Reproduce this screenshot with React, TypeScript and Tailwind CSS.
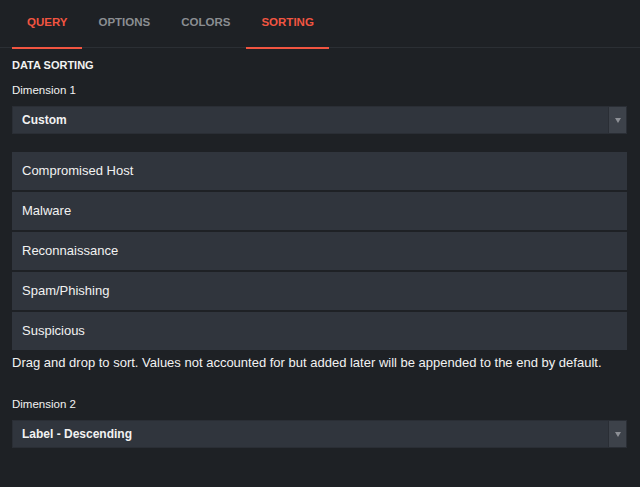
import React from 'react';

const tabs = [
  { label: 'QUERY', active: true },
  { label: 'OPTIONS', active: false },
  { label: 'COLORS', active: false },
  { label: 'SORTING', active: true },
];

const sortValues = ['Compromised Host', 'Malware', 'Reconnaissance', 'Spam/Phishing', 'Suspicious'];

function Select({ value }: { value: string }) {
  return (
    <div className="flex h-[28px] items-center justify-between bg-[#30353d] border border-[#2a2e35]">
      <span className="pl-[9px] text-[12px] font-bold text-[#f2f2f2]">{value}</span>
      <div className="flex h-full w-[18px] items-center justify-center bg-[#3d424a] border-l border-[#2a2e35]">
        <span className="block h-0 w-0 border-x-[3px] border-t-[5px] border-x-transparent border-t-[#8d9096]" />
      </div>
    </div>
  );
}

export default function App() {
  return (
    <div
      className="min-h-[487px] w-[640px] bg-[#1e2125] text-[#f2f2f2]"
      style={{ fontFamily: '"Liberation Sans", Arial, sans-serif' }}
    >
      {/* Tabs */}
      <nav className="flex h-[48px] gap-[1px] border-b border-[#2b2f34] pl-[12px]">
        {tabs.map((t) => (
          <div
            key={t.label}
            className={`flex h-[49px] items-center px-[15px] pb-[1px] text-[11.5px] font-bold ${
              t.active ? 'border-b-2 border-[#f25541] text-[#f25541]' : 'border-b-2 border-transparent text-[#8b8e92]'
            }`}
          >
            {t.label}
          </div>
        ))}
      </nav>

      <div className="pl-[12px] pr-[13px]">
        <div className="mt-[10px] text-[11px] font-bold leading-[14px]">DATA SORTING</div>
        <div className="mt-[11px] text-[11.5px] leading-[14px]">Dimension 1</div>
        <div className="mt-[9px]">
          <Select value="Custom" />
        </div>

        {/* Sortable list */}
        <div className="mt-[18px] flex flex-col gap-[2px]">
          {sortValues.map((v) => (
            <div key={v} className="flex h-[38px] items-center bg-[#30353d] pl-[10px] text-[13px]">
              {v}
            </div>
          ))}
        </div>

        <p className="mt-[6px] text-[13px] leading-[14px]">
          Drag and drop to sort. Values not accounted for but added later will be appended to the end by default.
        </p>

        <div className="mt-[27px] text-[11.5px] leading-[14px]">Dimension 2</div>
        <div className="mt-[9px]">
          <Select value="Label - Descending" />
        </div>
      </div>
    </div>
  );
}
